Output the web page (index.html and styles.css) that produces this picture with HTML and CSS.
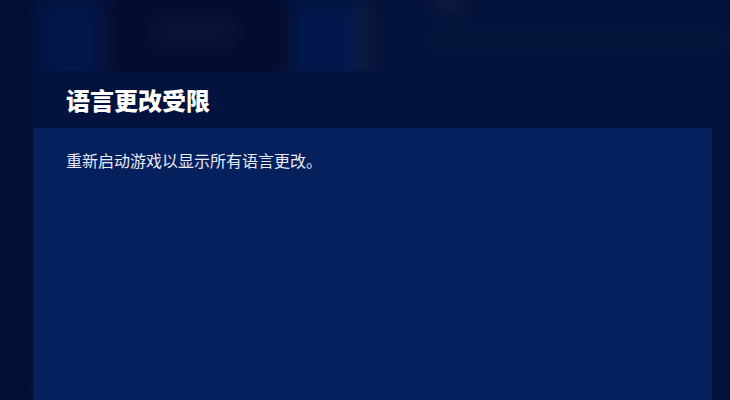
FILE: index.html
```html
<!DOCTYPE html>
<html lang="zh-CN">
<head>
<meta charset="utf-8">
<title>语言更改受限</title>
<link rel="stylesheet" href="styles.css">
</head>
<body>
<div class="backdrop">
  <div class="bg-edge"></div>
  <div class="bg-side"></div>
  <div class="bg-card"><div class="bg-card-glow"></div></div>
  <div class="bg-col"></div>
  <div class="bg-divider"></div>
  <div class="bg-main">
    <div class="bg-tab"></div>
    <div class="bg-strip"></div>
  </div>
</div>
<div class="dialog">
  <div class="dialog-header">
    <h1 class="dialog-title">语言更改受限</h1>
  </div>
  <div class="dialog-body">
    <p class="dialog-text">重新启动游戏以显示所有语言更改。</p>
  </div>
</div>
</body>
</html>
```
FILE: styles.css
```css
html, body {
  margin: 0;
  padding: 0;
  width: 730px;
  height: 400px;
  overflow: hidden;
  background: #011038;
  font-family: "Noto Sans CJK SC", "Noto Sans", sans-serif;
}

.backdrop {
  position: absolute;
  inset: -20px 0 0 0;
  padding-top: 20px;
  display: flex;
  filter: blur(9px);
}

.bg-edge {
  width: 40px;
  background: #010f36;
}

.bg-side {
  width: 64px;
  background: #02174a;
}

.bg-card {
  width: 186px;
  background: #050c2e;
  padding: 16px 0 0 50px;
  box-sizing: border-box;
}

.bg-card-glow {
  width: 80px;
  height: 30px;
  background: #0b1234;
}

.bg-col {
  width: 70px;
  background: #02184c;
}

.bg-divider {
  width: 10px;
  background: #141f3e;
}

.bg-main {
  flex: 1;
  background: #02123a;
  padding: 0 0 0 60px;
}

.bg-tab {
  width: 40px;
  height: 8px;
  background: #1d2846;
  border-radius: 4px;
}

.bg-strip {
  margin-top: 26px;
  height: 14px;
  background: #081a40;
}

.dialog {
  position: absolute;
  left: 33px;
  top: 71px;
  width: 679px;
  bottom: 0;
  display: flex;
  flex-direction: column;
}

.dialog-header {
  height: 57px;
  background: #03133d;
  display: flex;
  align-items: center;
  padding: 0 33px;
}

.dialog-title {
  margin: 0;
  font-size: 24px;
  font-weight: 900;
  color: #ffffff;
  line-height: 1;
}

.dialog-body {
  flex: 1;
  background: #06205e;
  padding: 20px 33px;
}

.dialog-text {
  margin: 0;
  font-size: 16px;
  line-height: 24px;
  color: #e6eaf3;
}
```
